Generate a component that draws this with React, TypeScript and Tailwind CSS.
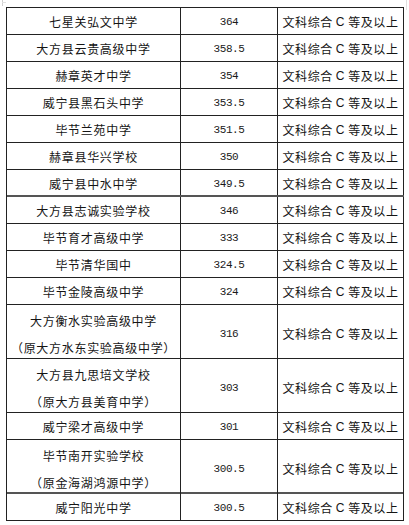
import React from "react";

type Row = { name: string[]; score: string };

const rows: Row[] = [
  { name: ["七星关弘文中学"], score: "364" },
  { name: ["大方县云贵高级中学"], score: "358.5" },
  { name: ["赫章英才中学"], score: "354" },
  { name: ["威宁县黑石头中学"], score: "353.5" },
  { name: ["毕节兰苑中学"], score: "351.5" },
  { name: ["赫章县华兴学校"], score: "350" },
  { name: ["威宁县中水中学"], score: "349.5" },
  { name: ["大方县志诚实验学校"], score: "346" },
  { name: ["毕节育才高级中学"], score: "333" },
  { name: ["毕节清华国中"], score: "324.5" },
  { name: ["毕节金陵高级中学"], score: "324" },
  { name: ["大方衡水实验高级中学", "（原大方水东实验高级中学）"], score: "316" },
  { name: ["大方县九思培文学校", "（原大方县美育中学）"], score: "303" },
  { name: ["威宁梁才高级中学"], score: "301" },
  { name: ["毕节南开实验学校", "（原金海湖鸿源中学）"], score: "300.5" },
  { name: ["威宁阳光中学"], score: "300.5" },
];

const thick = new Set([6, 14]);

const cjk = "font-['Noto_Sans_CJK_SC',sans-serif]";

export default function App() {
  return (
    <div className="w-[409px] h-[525px] bg-white relative overflow-hidden">
      <div className="absolute left-[2px] top-0 w-px h-[6px] bg-[#d0d0d0]" />
      <div className="absolute left-[2px] top-[2px] w-[4px] h-px bg-[#e0e0e0]" />
      <div className="absolute left-[406px] top-0 w-px h-[10px] bg-[#e0e0e0]" />
      <div className="pt-[7px] pl-[6px]">
        <div className="w-[398px] border-l border-t border-[#222]">
          {rows.map((r, i) => {
            const h = r.name.length === 2 ? "h-[54px]" : "h-[27px]";
            const b = thick.has(i) ? "border-b-2 border-b-[#555]" : "border-b border-b-[#222]";
            return (
              <div key={i} className={`grid grid-cols-[174px_97px_126px] ${h} ${b}`}>
                <div
                  className={`border-r border-[#222] flex flex-col items-center justify-center pt-[2px] ${cjk} text-[12px] tracking-[0.7px] text-[#151515] ${r.name.length === 2 ? "leading-[27px]" : "leading-[14px]"}`}
                >
                  {r.name.map((n, j) => (
                    <div key={j} className="whitespace-nowrap">
                      {n}
                    </div>
                  ))}
                </div>
                <div className="border-r border-[#222] flex items-center justify-center pt-[2px] font-['Liberation_Mono',monospace] text-[11px] tracking-[-0.4px] text-[#1a1a1a] leading-[14px]">
                  {r.score}
                </div>
                <div className={`border-r border-[#222] flex items-center justify-center pt-[2px] ${cjk} text-[12px] tracking-[0.6px] text-[#151515] leading-[14px] whitespace-nowrap`}>
                  文科综合<span className="font-['Liberation_Sans',sans-serif] text-[12px] mx-[3px]">C</span>等及以上
                </div>
              </div>
            );
          })}
        </div>
      </div>
    </div>
  );
}
